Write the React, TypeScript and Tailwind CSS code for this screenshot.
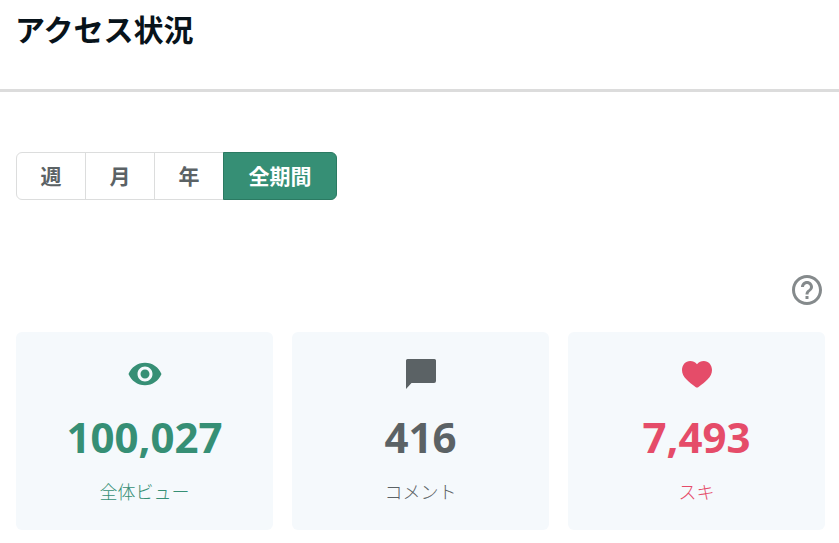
import React from "react";
import { MdHelpOutline, MdVisibility } from "react-icons/md";

type Stat = {
  label: string;
  value: number;
  color: string;
  icon: React.ReactNode;
};

const periods = ["週", "月", "年", "全期間"];

const CommentIcon = () => (
  <svg viewBox="0 0 36 36" className="w-9 h-9" fill="currentColor" aria-hidden="true">
    <path d="M4.500 3H31.500Q33 3 33 4.500V25Q33 27 31 27H8.500L3 33V4.500Q3 3 4.500 3z" />
  </svg>
);

const HeartIcon = () => (
  <svg viewBox="0 0 32 28" className="w-8 h-7" fill="currentColor" aria-hidden="true">
    <path d="M16 4.200C17.800 2 20.200 1 22.800 1 27.500 1 31 4.900 31 10c0 3.500-1.600 6.600-4.300 9.300-2.600 2.700-5.700 5.100-9.200 7.700-1 .8-2 .8-3 0-3.500-2.600-6.600-5-9.200-7.700C2.600 16.600 1 13.500 1 10 1 4.900 4.500 1 9.200 1c2.600 0 5 1 6.800 3.200z" />
  </svg>
);

const stats: Stat[] = [
  {
    label: "全体ビュー",
    value: 100027,
    color: "text-[#368f75]",
    icon: <MdVisibility className="w-9 h-9" />,
  },
  {
    label: "コメント",
    value: 416,
    color: "text-[#5b6265]",
    icon: <CommentIcon />,
  },
  {
    label: "スキ",
    value: 7493,
    color: "text-[#e54c69]",
    icon: <HeartIcon />,
  },
];

export default function App() {
  const [period, setPeriod] = React.useState("全期間");

  return (
    <main className="min-h-screen bg-white font-['Noto_Sans','Noto_Sans_CJK_JP',sans-serif]">
      <header className="border-b-3 border-[#dcdcdc] px-[15px] pt-1.5 pb-[38px]">
        <h1 className="font-['Noto_Sans_CJK_JP',sans-serif] text-[30px] leading-[45px] font-bold text-[#08131a]">アクセス状況</h1>
      </header>

      <div className="pt-15 pr-3.5 pb-3 pl-4">
        <div className="flex h-12">
          {periods.map((item) => (
            <button
              key={item}
              type="button"
              aria-pressed={item === period}
              onClick={() => setPeriod(item)}
              className={`-ml-px min-w-[70px] border pt-0.5 text-[21px] font-bold first:ml-0 first:rounded-l-md last:min-w-[114px] last:rounded-r-md ${
                item === period ? "border-[#2b7a62] bg-[#368f75] text-white" : "border-[#dcdddd] bg-white text-[#5b6265]"
              }`}
            >
              {item}
            </button>
          ))}
        </div>

        <div className="mt-18 flex justify-end">
          <button type="button" aria-label="ヘルプ" className="text-[#858a8c]">
            <MdHelpOutline className="w-9 h-9" />
          </button>
        </div>

        <div className="mt-6 grid grid-cols-3 gap-[19px]">
          {stats.map((stat) => (
            <section key={stat.label} className={`flex h-[198px] flex-col items-center rounded-md bg-[#f5f9fc] pt-6 ${stat.color}`}>
              <div className="flex h-9 items-center">{stat.icon}</div>
              <p className="mt-[19px] text-[42px] leading-[52px] font-bold">{stat.value.toLocaleString("en-US")}</p>
              <h2 className="mt-[17px] text-[18px] leading-6 font-light">{stat.label}</h2>
            </section>
          ))}
        </div>
      </div>
    </main>
  );
}
